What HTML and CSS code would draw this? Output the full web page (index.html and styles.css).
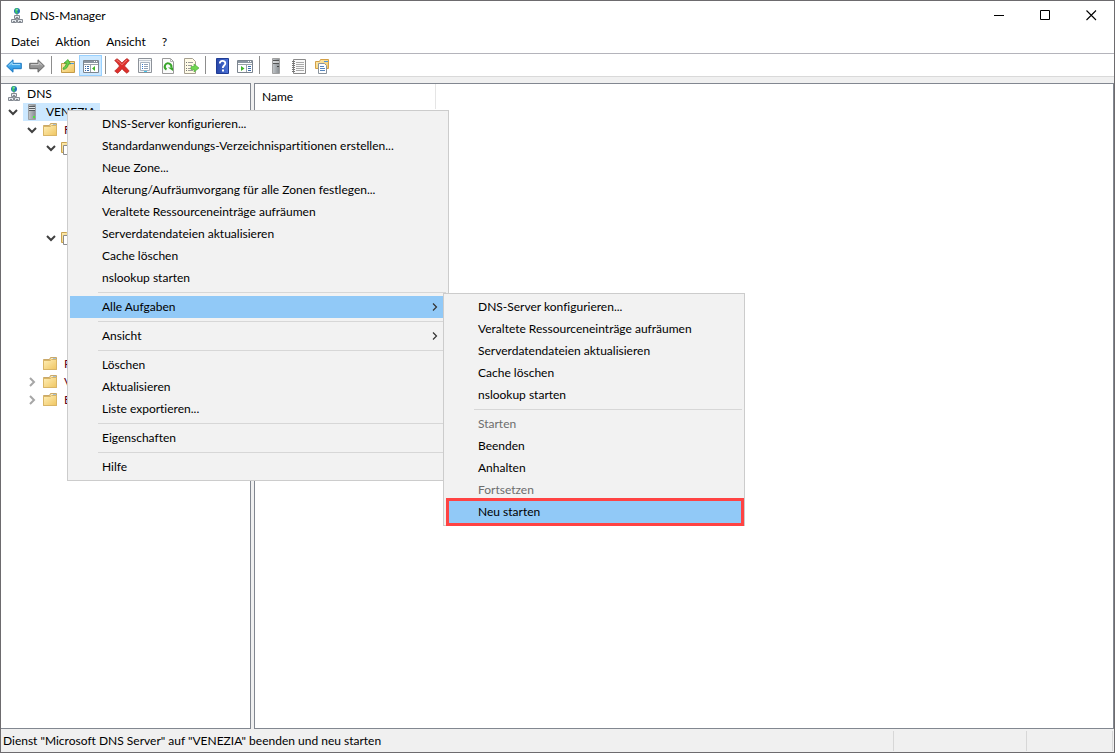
FILE: index.html
```html
<!DOCTYPE html>
<html lang="de">
<head>
<meta charset="utf-8">
<title>DNS-Manager</title>
<link rel="stylesheet" href="styles.css">
</head>
<body>
<svg class="sprite" aria-hidden="true">
  <defs>
    <linearGradient id="g-folder" x1="0" y1="0" x2="1" y2="1"><stop offset="0" stop-color="#ffefb8"/><stop offset="1" stop-color="#efc560"/></linearGradient>
    <linearGradient id="g-blue" x1="0" y1="0" x2="0" y2="1"><stop offset="0" stop-color="#6fc6f5"/><stop offset="1" stop-color="#1a8be0"/></linearGradient>
    <linearGradient id="g-gray" x1="0" y1="0" x2="0" y2="1"><stop offset="0" stop-color="#b0b0b0"/><stop offset="1" stop-color="#808080"/></linearGradient>
    <linearGradient id="g-help" x1="0" y1="0" x2="1" y2="0"><stop offset="0" stop-color="#2746a8"/><stop offset="1" stop-color="#4d74d8"/></linearGradient>
    <linearGradient id="g-server" x1="0" y1="0" x2="1" y2="0"><stop offset="0" stop-color="#c3c7ca"/><stop offset="1" stop-color="#868b8f"/></linearGradient>
  </defs>
  <symbol id="i-dns" viewBox="0 0 16 16">
    <circle cx="8" cy="3" r="3" fill="#2573b8"/><path d="M6 .7l2-.7 1.500 1.500L8 3l1 2-1.500 1L6 4z" fill="#3cc463"/><path d="M7.500 1h1v1.500h-1z" fill="#b4f0d4"/>
    <path d="M8 6v2" stroke="#777"/>
    <path d="M5.500 7.500h5v3h-5zM2.500 11.500h5v3h-5zM8.500 11.500h5v3h-5z" fill="#e4e8ec" stroke="#858a92"/>
    <path d="M7 9.500h2M4 13.500h2M10 13.500h2" stroke="#858a92"/>
  </symbol>
  <symbol id="i-folder" viewBox="0 0 16 16">
    <path d="M1.500 3.500h6l1-2h6v12h-13z" fill="#f3d58b" stroke="#c9a869"/>
    <path d="M9 2.500h5v2H9z" fill="#fff"/><path d="M11 3h3" stroke="#4c94e0"/>
    <path d="M1.500 4.500h7l1-1h5v10h-13z" fill="url(#g-folder)" stroke="#d9b566"/>
  </symbol>
  <symbol id="i-folders" viewBox="0 0 16 16">
    <path d="M.5 2.500h5l1-1h6v11H.5z" fill="url(#g-folder)" stroke="#c9a452"/>
    <path d="M2.500 5.500h9v9h-9z" fill="#fff" stroke="#8b8b8b"/>
  </symbol>
  <symbol id="i-server" viewBox="0 0 16 16">
    <path d="M4.500.5h7v15h-7z" fill="url(#g-server)" stroke="#9ba0a5"/>
    <path d="M5 2.500h6M5 4.500h6M5 6.500h6" stroke="#555b60"/><path d="M5 3.500h6M5 5.500h6" stroke="#dfe2e4"/><path d="M9 13h2" stroke="#48e63c" stroke-width="2"/>
  </symbol>
  <symbol id="i-open" viewBox="0 0 12 12"><path d="M2 4l4 4 4-4" fill="none" stroke="#404040" stroke-width="2"/></symbol>
  <symbol id="i-closed" viewBox="0 0 12 12"><path d="M4 2l4 4-4 4" fill="none" stroke="#a6a6a6" stroke-width="2"/></symbol>
</svg>

<div class="window">
  <header class="titlebar">
    <svg class="icon"><use href="#i-dns"/></svg>
    <span class="title">DNS-Manager</span>
    <button class="caption" aria-label="Minimieren"><svg class="glyph" viewBox="0 0 11 11"><path d="M0 5.500h10" stroke="#000"/></svg></button>
    <button class="caption" aria-label="Maximieren"><svg class="glyph" viewBox="0 0 11 11"><path d="M.5.500h9v9H.5z" fill="none" stroke="#000"/></svg></button>
    <button class="caption" aria-label="Schließen"><svg class="glyph" viewBox="0 0 11 11"><path d="M.5.500l9.500 9.500M10 .500L.5 10" stroke="#000" stroke-width="1.100"/></svg></button>
  </header>

  <nav class="menubar">
    <button>Datei</button><button>Aktion</button><button>Ansicht</button><button>?</button>
  </nav>

  <div class="toolbar" role="toolbar">
    <button aria-label="Zurück"><svg class="icon" viewBox="0 0 16 16"><path d="M.6 8L7 1.800v3.500h8.300v5.400H7v3.500z" fill="url(#g-blue)" stroke="#1d78c0"/><path d="M3 7.500L6 4.500V6.500h8" fill="none" stroke="#a5dcfa"/></svg></button>
    <button aria-label="Vorwärts"><svg class="icon" viewBox="0 0 16 16"><path d="M15.400 8L9 1.800v3.500H.7v5.400H9v3.500z" fill="url(#g-gray)" stroke="#666"/><path d="M2 6.500h8V4.500l2.800 2.800" fill="none" stroke="#c8c8c8"/></svg></button>
    <i class="bar"></i>
    <button aria-label="Eine Ebene nach oben"><svg class="icon" viewBox="0 0 16 16"><path d="M1.500 5.500h5l1-2h7v11h-13z" fill="url(#g-folder)" stroke="#c39b49"/><path d="M10 5.500h4" stroke="#4c94e0"/><path d="M3.500 11.500c3-.5 4.500-2.500 5-5.500h2L8 1.500 4 5h2.300C6 7.500 5 9 3 10z" fill="#6ad14a" stroke="#38982a" stroke-width=".7"/></svg></button>
    <button class="pressed" aria-label="Konsolenstruktur ein-/ausblenden"><svg class="icon" viewBox="0 0 16 16"><path d="M.5 2.500h15v12H.5z" fill="#fff" stroke="#7c858f"/><path d="M1 4h14" stroke="#8b96a2" stroke-width="2"/><path d="M11 3.500h1M13 3.500h1" stroke="#fff"/><path d="M1 6.500h14M7.500 7v7" stroke="#9aa2aa"/><path d="M2 8.500h1M4 8.500h2M2 10.500h1M4 10.500h2M2 12.500h1M4 12.500h2" stroke="#3c6ca8"/><path d="M12 8v5l-3-2.500z" fill="#3fb529"/></svg></button>
    <i class="bar"></i>
    <button aria-label="Löschen"><svg class="icon" viewBox="0 0 16 16"><path d="M.7 2.500L3 .7c2 1.300 3.500 2.800 5 4.300 1.500-1.800 3-3.200 5-4.500l2.300 2C13.500 4 12 5.800 10.500 8c1.500 1.500 3 3 4.700 5L13 15.300C11 14 9.500 12.500 8 10.700c-1.300 1.600-2.500 3.200-4.500 4.600L.7 13c2-1.500 3.500-3.200 4.800-5C4 6 2.500 4 .7 2.500z" fill="#de2f2b" stroke="#b02622" stroke-width=".7"/><path d="M2.500 2.200C5 3.500 6.500 5 8 6.800 9.500 5 11 3.300 13 2" fill="none" stroke="#f08078"/></svg></button>
    <button aria-label="Eigenschaften"><svg class="icon" viewBox="0 0 16 16"><path d="M1.500.5h13v14h-13z" fill="#f4f6f8" stroke="#8d9299"/><path d="M2 2.500h12" stroke="#c5cbd2"/><path d="M3.500 4.500h9v8h-9z" fill="#fff" stroke="#a7b3c0"/><path d="M5 6.500h1M5 8.500h1M5 10.500h1" stroke="#2f78cf"/><path d="M7 6.500h4M7 8.500h4M7 10.500h4" stroke="#8fa0b5"/><path d="M7 13.500h3" stroke="#46c8ee"/></svg></button>
    <button aria-label="Aktualisieren"><svg class="icon" viewBox="0 0 16 16"><path d="M2.500.5h8l3 3v12h-11z" fill="#fbfbfb" stroke="#9a9a9a"/><path d="M10.500.5v3h3" fill="none" stroke="#b5b5b5"/><path d="M6.500 11.500a3.300 3.300 0 1 1 4.700-1.800" fill="none" stroke="#38a52a" stroke-width="2"/><path d="M8 9.500h5V13z" fill="#38a52a"/></svg></button>
    <button aria-label="Liste exportieren"><svg class="icon" viewBox="0 0 16 16"><path d="M1.500.5h8l3 3v12h-11z" fill="#fffbe6" stroke="#a59f90"/><path d="M3 4.500h1M3 7.500h1M3 10.500h1M3 12.500h1" stroke="#777"/><path d="M5 4.500h5M5 7.500h4M5 10.500h3M5 12.500h5" stroke="#9b9b9b"/><path d="M8 8.500h3V6l5 4-5 4v-2.500H8z" fill="#6fd64f" stroke="#48a838" stroke-width=".6"/></svg></button>
    <i class="bar"></i>
    <button aria-label="Hilfe"><svg class="icon" viewBox="0 0 16 16"><path d="M2.500.5h12v15h-12z" fill="url(#g-help)" stroke="#203c94"/><path d="M5.800 5.500c0-3.500 5.500-3.500 5.500-.2C11.300 7.500 8.800 7.500 8.800 10" fill="none" stroke="#fff" stroke-width="1.800"/><path d="M8 11.500h2v2H8z" fill="#fff"/></svg></button>
    <button aria-label="Aktionsbereich ein-/ausblenden"><svg class="icon" viewBox="0 0 16 16"><path d="M.5 2.500h15v12H.5z" fill="#fff" stroke="#7c858f"/><path d="M1 4h14" stroke="#8b96a2" stroke-width="2"/><path d="M11 3.500h1M13 3.500h1" stroke="#fff"/><path d="M1 6.500h14M9.500 7v7" stroke="#9aa2aa"/><path d="M11 8.500h3M11 10.500h3M11 12.500h3" stroke="#3c6ca8"/><path d="M4 8v5l3.500-2.500z" fill="#3fb529"/></svg></button>
    <i class="bar"></i>
    <button aria-label="Server"><svg class="icon" viewBox="0 0 16 16"><path d="M4.500.5h7v15h-7z" fill="url(#g-server)" stroke="#a0a0a0"/><path d="M5 2.500h6M5 5.500h6" stroke="#555"/><path d="M5 4h6" stroke="#eee"/><path d="M9 8.500h2" stroke="#444"/></svg></button>
    <button aria-label="Liste"><svg class="icon" viewBox="0 0 16 16"><path d="M2.500 1.500h12v14h-12z" fill="#fafafa" stroke="#8a8a8a"/><path d="M1 3.500h3M1 5.500h3M1 7.500h3M1 9.500h3M1 11.500h3M1 13.500h3" stroke="#777"/><path d="M5 4.500h8M5 6.500h8M5 8.500h8M5 10.500h8M5 12.500h8" stroke="#aaa"/></svg></button>
    <button aria-label="Neue Zone"><svg class="icon" viewBox="0 0 16 16"><path d="M1.500 3.500h4l1-2h8v9h-13z" fill="url(#g-folder)" stroke="#d4a046"/><path d="M10 3.500h4" stroke="#4c94e0"/><path d="M4.500 5.500h6l2 2v8h-8z" fill="#fff" stroke="#8b949d"/><path d="M6 8.500h4M6 10.500h5M6 12.500h5" stroke="#5585bd"/></svg></button>
  </div>

  <main class="panes">
    <section class="tree">
      <div class="node root"><svg class="icon"><use href="#i-dns"/></svg><span>DNS</span></div>
      <div class="node level1">
        <svg class="arrow"><use href="#i-open"/></svg>
        <span class="selected"><svg class="icon"><use href="#i-server"/></svg><span>VENEZIA</span></span>
      </div>
      <div class="node level2"><svg class="arrow"><use href="#i-open"/></svg><svg class="icon"><use href="#i-folder"/></svg><span class="stub">F</span></div>
      <div class="node level3 zones-short"><svg class="arrow"><use href="#i-open"/></svg><svg class="icon"><use href="#i-folders"/></svg></div>
      <div class="node level3 zones-long"><svg class="arrow"><use href="#i-open"/></svg><svg class="icon"><use href="#i-folders"/></svg></div>
      <div class="node level2"><span class="arrow"></span><svg class="icon"><use href="#i-folder"/></svg><span class="stub">R</span></div>
      <div class="node level2"><svg class="arrow"><use href="#i-closed"/></svg><svg class="icon"><use href="#i-folder"/></svg><span class="stub">V</span></div>
      <div class="node level2"><svg class="arrow"><use href="#i-closed"/></svg><svg class="icon"><use href="#i-folder"/></svg><span class="stub">B</span></div>
    </section>
    <section class="list">
      <table><thead><tr><th>Name</th></tr></thead></table>
    </section>
  </main>

  <footer class="status">
    <span class="message">Dienst "Microsoft DNS Server" auf "VENEZIA" beenden und neu starten</span>
    <span class="cell cell-wide"></span>
    <span class="cell"></span>
  </footer>

  <div class="menu context" role="menu">
    <button role="menuitem">DNS-Server konfigurieren...</button>
    <button role="menuitem">Standardanwendungs-Verzeichnispartitionen erstellen...</button>
    <button role="menuitem">Neue Zone...</button>
    <button role="menuitem">Alterung/Aufräumvorgang für alle Zonen festlegen...</button>
    <button role="menuitem">Veraltete Ressourceneinträge aufräumen</button>
    <button role="menuitem">Serverdatendateien aktualisieren</button>
    <button role="menuitem">Cache löschen</button>
    <button role="menuitem">nslookup starten</button>
    <hr>
    <div class="parent">
      <button class="active" role="menuitem" aria-haspopup="true">Alle Aufgaben<svg class="more" viewBox="0 0 8 10"><path d="M2 1.500L5.500 5 2 8.500" fill="none" stroke="#333" stroke-width="1.200"/></svg></button>
      <div class="menu submenu" role="menu">
        <button role="menuitem">DNS-Server konfigurieren...</button>
        <button role="menuitem">Veraltete Ressourceneinträge aufräumen</button>
        <button role="menuitem">Serverdatendateien aktualisieren</button>
        <button role="menuitem">Cache löschen</button>
        <button role="menuitem">nslookup starten</button>
        <hr>
        <button role="menuitem" disabled>Starten</button>
        <button role="menuitem">Beenden</button>
        <button role="menuitem">Anhalten</button>
        <button role="menuitem" disabled>Fortsetzen</button>
        <button class="active marked" role="menuitem">Neu starten</button>
      </div>
    </div>
    <hr>
    <button role="menuitem" aria-haspopup="true">Ansicht<svg class="more" viewBox="0 0 8 10"><path d="M2 1.500L5.500 5 2 8.500" fill="none" stroke="#333" stroke-width="1.200"/></svg></button>
    <hr>
    <button role="menuitem">Löschen</button>
    <button role="menuitem">Aktualisieren</button>
    <button role="menuitem">Liste exportieren...</button>
    <hr>
    <button role="menuitem">Eigenschaften</button>
    <hr>
    <button role="menuitem">Hilfe</button>
  </div>
</div>
</body>
</html>
```
FILE: styles.css
```css
* { box-sizing: border-box; }

body {
  margin: 0;
  font: 12px/18px Lato, "Open Sans", sans-serif;
  font-variant-ligatures: none;
  color: #000;
}

button {
  padding: 0;
  border: 0;
  background: none;
  font: inherit;
  font-variant-ligatures: none;
  color: inherit;
}

svg { display: block; }
.sprite { position: absolute; width: 0; height: 0; }
.icon { width: 16px; height: 16px; flex: none; }

.window {
  position: relative;
  display: flex;
  flex-direction: column;
  height: 100vh;
  border: 1px solid #6d6b6e;
  background: #fff;
}

.titlebar { display: flex; align-items: center; height: 30px; padding-left: 8px; }
.title { flex: 1; padding-left: 5px; }
.caption {
  display: grid;
  place-items: center;
  align-self: flex-start;
  width: 46px;
  height: 28px;
}
.glyph { width: 11px; height: 11px; }

.menubar { display: flex; height: 22px; padding-left: 2px; }
.menubar button { padding: 0 8px; }

.toolbar {
  display: flex;
  align-items: flex-end;
  height: 24px;
  padding-left: 1px;
  border-top: 1px solid #b4b4bb;
  border-bottom: 1px solid #d9d9d9;
}
.toolbar button { display: grid; place-items: center; width: 23px; height: 21px; }
.toolbar .pressed { background: #cce8ff; border: 1px solid #99d1ff; }
.bar { width: 1px; height: 18px; margin: 0 4px 2px 3px; background: #8d8d8d; }

.panes {
  flex: 1;
  display: flex;
  gap: 3px;
  min-height: 0;
  padding-top: 6px;
  background: #f0f0f0;
}
.tree, .list { border: 1px solid #828790; background: #fff; }
.tree { width: 250px; padding-top: 1px; border-left: 0; }
.list { flex: 1; }

.node { display: flex; align-items: center; height: 18px; }
.node .arrow { width: 12px; height: 12px; margin-right: 4px; }
.root { gap: 5px; padding-left: 5px; }
.level1 { padding-left: 6px; }
.level2 { padding-left: 25px; }
.level3 { padding-left: 44px; }
.stub { padding-left: 6px; color: #5c0020; }
.zones-short { margin-bottom: 72px; }
.zones-long { margin-bottom: 108px; }
.selected {
  display: flex;
  align-items: center;
  gap: 6px;
  height: 18px;
  padding: 0 4px 0 1px;
  background: #cce8ff;
}

table { border-collapse: collapse; }
th {
  width: 180px;
  height: 25px;
  padding: 0 7px;
  border-right: 1px solid #e5e5e5;
  font-weight: normal;
  text-align: left;
}

.status {
  display: flex;
  height: 23px;
  padding: 2px 1px 1px 2px;
  background: #f0f0f0;
}
.message { flex: 1; line-height: 20px; }
.cell { width: 87px; border: solid #d7d7d7; border-width: 0 1px; }
.cell-wide { width: 133px; border-right: 0; }

.menu {
  position: absolute;
  padding: 2px;
  border: 1px solid #ccc;
  background: #f2f2f2;
}
.context { left: 66px; top: 109px; width: 382px; }
.submenu { left: calc(100% - 3px); top: -3px; width: 302px; }
.parent { position: relative; }
.menu button {
  display: flex;
  align-items: center;
  justify-content: space-between;
  width: 100%;
  height: 22px;
  padding: 0 7px 0 32px;
  text-align: left;
  white-space: nowrap;
}
.menu button:disabled { color: #6d6d6d; }
.menu .active { background: #91c9f7; }
.menu hr {
  height: 1px;
  margin: 3px 0 3px 28px;
  border: 0;
  background: #d7d7d7;
}
.more { width: 8px; height: 10px; }

.marked { position: relative; }
.marked::after {
  content: "";
  position: absolute;
  inset: -3px -2px -3px 0;
  border: 3px solid #ff4343;
}
```
